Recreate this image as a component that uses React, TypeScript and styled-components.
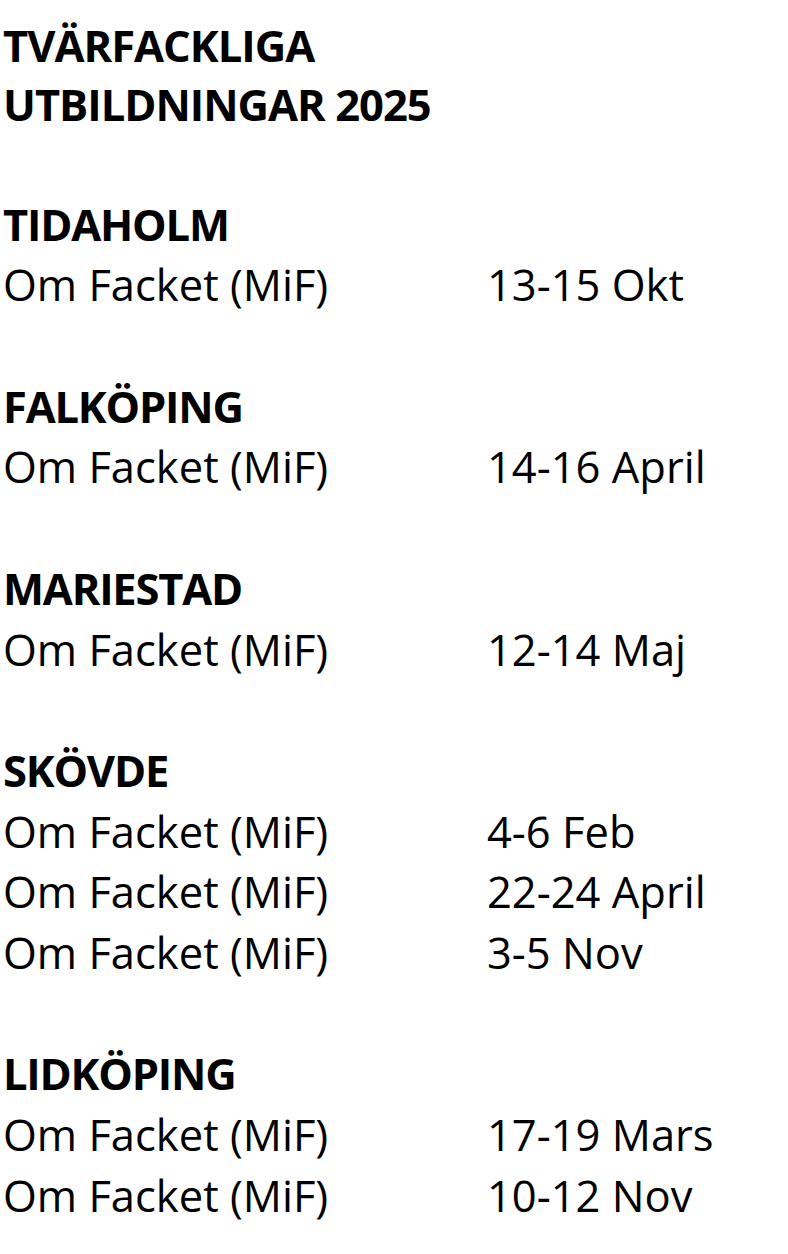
import React from "react";
import styled, { createGlobalStyle } from "styled-components";

interface Course {
    name: string;
    dates: string;
}

interface Place {
    town: string;
    courses: Course[];
}

const places: Place[] = [
    { town: "TIDAHOLM", courses: [{ name: "Om Facket (MiF)", dates: "13-15 Okt" }] },
    { town: "FALKÖPING", courses: [{ name: "Om Facket (MiF)", dates: "14-16 April" }] },
    { town: "MARIESTAD", courses: [{ name: "Om Facket (MiF)", dates: "12-14 Maj" }] },
    {
        town: "SKÖVDE",
        courses: [
            { name: "Om Facket (MiF)", dates: "4-6 Feb" },
            { name: "Om Facket (MiF)", dates: "22-24 April" },
            { name: "Om Facket (MiF)", dates: "3-5 Nov" },
        ],
    },
    {
        town: "LIDKÖPING",
        courses: [
            { name: "Om Facket (MiF)", dates: "17-19 Mars" },
            { name: "Om Facket (MiF)", dates: "10-12 Nov" },
        ],
    },
];

export default function App() {
    return (
        <>
            <GlobalStyle />
            <Page>
                <Title>
                    TVÄRFACKLIGA
                    <br />
                    UTBILDNINGAR 2025
                </Title>
                {places.map((place) => (
                    <Section key={place.town}>
                        <Town>{place.town}</Town>
                        {place.courses.map((course, i) => (
                            <CourseRow key={i}>
                                <span>{course.name}</span>
                                <span>{course.dates}</span>
                            </CourseRow>
                        ))}
                    </Section>
                ))}
            </Page>
        </>
    );
}

const GlobalStyle = createGlobalStyle`
    html, body {
        margin: 0;
        background: #ffffff;
    }
`;

const Page = styled.div`
    width: 788px;
    min-height: 1254px;
    box-sizing: border-box;
    padding: 16px 0 0 3px;
    font-family: "Open Sans", "Noto Sans", sans-serif;
    font-size: 43.5px;
    color: #000000;
    display: flex;
    flex-direction: column;
    gap: 60.7px;
`;

const Title = styled.h1`
    margin: 0;
    font-size: inherit;
    font-weight: 700;
    line-height: 59px;
    letter-spacing: -1px;
`;

const Section = styled.section`
    display: flex;
    flex-direction: column;
    line-height: 60.7px;
`;

const Town = styled.h2`
    margin: 0;
    font-size: inherit;
    font-weight: 700;
    line-height: inherit;
    letter-spacing: -1.2px;
`;

const CourseRow = styled.div`
    display: grid;
    grid-template-columns: 484px auto;
    white-space: nowrap;
`;
